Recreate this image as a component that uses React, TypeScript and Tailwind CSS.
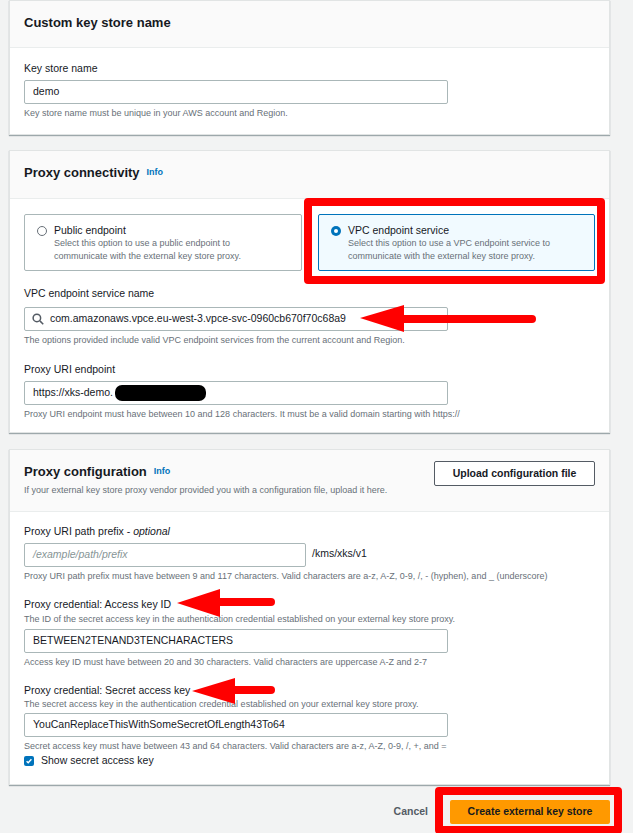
import React from "react";

const font = { fontFamily: '"Liberation Sans", Arial, sans-serif' };

function Label({ children }: { children: React.ReactNode }) {
  return <div className="text-[10.5px] leading-[14px] text-[#16191f]">{children}</div>;
}
function Help({ children, className = "" }: { children: React.ReactNode; className?: string }) {
  return <div className={"text-[9px] leading-[11px] text-[#687078] " + className}>{children}</div>;
}
function Input({ children, className = "w-[424px]" }: { children?: React.ReactNode; className?: string }) {
  return (
    <div className={"h-[24px] border border-[#aab7b8] rounded-[2px] bg-white flex items-center px-[8px] text-[10.5px] text-[#16191f] " + className}>
      {children}
    </div>
  );
}
function Info() {
  return <span className="text-[9px] font-bold text-[#0073bb] ml-[7px]">Info</span>;
}

export default function App() {
  return (
    <div style={font} className="relative w-[633px] h-[833px] bg-[#f2f3f3] overflow-hidden">
      <div className="ml-[9px] w-[601px]">
        {/* Panel 1 */}
        <section className="bg-white border border-[#e1e4e4] shadow-[0_1px_1px_rgba(0,28,36,0.35)]">
          <div className="h-[47px] px-[14px] bg-[#fafafa] border-b border-[#eaeded] flex items-center pb-[3px]">
            <h2 className="text-[13px] font-bold text-[#16191f]">Custom key store name</h2>
          </div>
          <div className="px-[14px] pt-[13px] pb-[15px]">
            <Label>Key store name</Label>
            <Input className="w-[424px] mt-[5px]">demo</Input>
            <Help className="mt-[4px]">Key store name must be unique in your AWS account and Region.</Help>
          </div>
        </section>

        {/* Panel 2 */}
        <section className="mt-[15px] bg-white border border-[#e1e4e4] shadow-[0_1px_1px_rgba(0,28,36,0.35)]">
          <div className="h-[48px] px-[14px] bg-[#fafafa] border-b border-[#eaeded] flex items-center pb-[3px]">
            <h2 className="text-[13px] font-bold text-[#16191f]">Proxy connectivity</h2>
            <Info />
          </div>
          <div className="px-[14px] pt-[15px] pb-[12px]">
            <div className="flex gap-[16px]">
              <div className="w-[278px] h-[57px] border border-[#aab7b8] rounded-[2px] flex pl-[12px] pt-[9px]">
                <span className="mt-[2px] w-[10px] h-[10px] rounded-full border border-[#687078] bg-white shrink-0" />
                <div className="ml-[7px]">
                  <div className="text-[10.5px] leading-[13px] text-[#16191f]">Public endpoint</div>
                  <div className="text-[9px] leading-[13px] text-[#687078]">
                    Select this option to use a public endpoint to
                    <br />
                    communicate with the external key store proxy.
                  </div>
                </div>
              </div>
              <div className="w-[277px] h-[57px] border border-[#0073bb] bg-[#f1faff] rounded-[2px] flex pl-[12px] pt-[9px]">
                <span className="mt-[2px] w-[10px] h-[10px] rounded-full bg-[#0073bb] shrink-0 flex items-center justify-center">
                  <span className="w-[4px] h-[4px] rounded-full bg-white" />
                </span>
                <div className="ml-[7px]">
                  <div className="text-[10.5px] leading-[13px] text-[#16191f]">VPC endpoint service</div>
                  <div className="text-[9px] leading-[13px] text-[#687078]">
                    Select this option to use a VPC endpoint service to
                    <br />
                    communicate with the external key store proxy.
                  </div>
                </div>
              </div>
            </div>
            <div className="mt-[15px]">
              <Label>VPC endpoint service name</Label>
              <Input className="w-[424px] mt-[7px] relative">
                <svg width="12" height="12" viewBox="0 0 16 16" className="mr-[6px] ml-[-1px]" fill="none" stroke="#545b64" strokeWidth="2">
                  <circle cx="6.5" cy="6.5" r="5" />
                  <path d="M10.5 10.5l4.5 4.5" />
                </svg>
                <span>com.amazonaws.vpce.eu-west-3.vpce-svc-0960cb670f70c68a9</span>
                <svg width="10" height="10" viewBox="0 0 16 16" className="absolute right-[7px]" fill="none" stroke="#545b64" strokeWidth="2">
                  <path d="M3 6l5 5 5-5" />
                </svg>
              </Input>
              <Help className="mt-[4px]">The options provided include valid VPC endpoint services from the current account and Region.</Help>
            </div>
            <div className="mt-[16px]">
              <Label>Proxy URI endpoint</Label>
              <Input className="w-[424px] mt-[5px]">
                <span>https://xks-demo.</span>
                <span className="inline-block w-[91px] h-[16px] bg-black rounded-[7px] ml-[2px]" />
              </Input>
              <Help className="mt-[4px]">Proxy URI endpoint must have between 10 and 128 characters. It must be a valid domain starting with https://</Help>
            </div>
          </div>
        </section>

        {/* Panel 3 */}
        <section className="mt-[16px] bg-white border border-[#e1e4e4] shadow-[0_1px_1px_rgba(0,28,36,0.35)]">
          <div className="h-[62px] px-[14px] bg-[#fafafa] border-b border-[#eaeded] flex items-start justify-between">
            <div className="pt-[14px]">
              <div className="flex items-center">
                <h2 className="text-[13px] leading-[16px] font-bold text-[#16191f]">Proxy configuration</h2>
                <Info />
              </div>
              <div className="text-[9px] leading-[11px] text-[#687078] mt-[5px]">
                If your external key store proxy vendor provided you with a configuration file, upload it here.
              </div>
            </div>
            <div className="mt-[11px] w-[161px] h-[25px] border border-[#545b64] rounded-[2px] bg-white flex items-center justify-center text-[10.5px] font-bold text-[#16191f]">
              Upload configuration file
            </div>
          </div>
          <div className="px-[14px] pt-[12px] pb-[15px]">
            <Label>
              Proxy URI path prefix - <i>optional</i>
            </Label>
            <div className="flex items-center mt-[5px]">
              <Input className="w-[282px]">
                <span className="italic text-[#879596]">/example/path/prefix</span>
              </Input>
              <span className="ml-[6px] text-[10.5px] text-[#16191f] -mt-[3px]">/kms/xks/v1</span>
            </div>
            <Help className="mt-[4px]">
              Proxy URI path prefix must have between 9 and 117 characters. Valid characters are a-z, A-Z, 0-9, /, - (hyphen), and _ (underscore)
            </Help>

            <div className="mt-[15px]">
              <Label>Proxy credential: Access key ID</Label>
              <Help className="mt-[3px]">The ID of the secret access key in the authentication credential established on your external key store proxy.</Help>
              <Input className="w-[424px] mt-[4px]">BETWEEN2TENAND3TENCHARACTERS</Input>
              <Help className="mt-[4px]">Access key ID must have between 20 and 30 characters. Valid characters are uppercase A-Z and 2-7</Help>
            </div>

            <div className="mt-[15px]">
              <Label>Proxy credential: Secret access key</Label>
              <Help className="mt-[2px]">The secret access key in the authentication credential established on your external key store proxy.</Help>
              <Input className="w-[424px] mt-[3px]">YouCanReplaceThisWithSomeSecretOfLength43To64</Input>
              <Help className="mt-[4px]">Secret access key must have between 43 and 64 characters. Valid characters are a-z, A-Z, 0-9, /, +, and =</Help>
              <div className="flex items-center mt-[1px]">
                <span className="w-[10px] h-[10px] rounded-[2px] bg-[#0073bb] flex items-center justify-center">
                  <svg width="8" height="8" viewBox="0 0 10 10" fill="none" stroke="white" strokeWidth="1.8">
                    <path d="M2 5.2l2 2L8 2.8" />
                  </svg>
                </span>
                <span className="ml-[7px] text-[10.5px] text-[#16191f]">Show secret access key</span>
              </div>
            </div>
          </div>
        </section>

        {/* Footer */}
        <div className="flex justify-end items-center mt-[15px]">
          <span className="text-[10.5px] font-bold text-[#545b64] mr-[22px]">Cancel</span>
          <div className="w-[160px] h-[24px] bg-[#ff9900] rounded-[2px] flex items-center justify-center text-[10.5px] font-bold text-[#16191f]">
            Create external key store
          </div>
        </div>
      </div>

      {/* Annotations */}
      <div className="absolute left-[304px] top-[198px] w-[301px] h-[86px] border-[8px] border-[#ff0000] rounded-[4px]" />
      <div className="absolute left-[435px] top-[787px] w-[187px] h-[47px] border-[8px] border-[#ff0000] rounded-[4px]" />
      <svg className="absolute left-0 top-0" width="633" height="833">
        <g fill="#ff0000" stroke="#ff0000">
          <line x1="400" y1="319" x2="532" y2="319" strokeWidth="8" strokeLinecap="round" />
          <polygon points="360,318 404,305 404,332" stroke="none" />
          <line x1="215" y1="602" x2="271" y2="602" strokeWidth="8" strokeLinecap="round" />
          <polygon points="177,603 220,589 220,617" stroke="none" />
          <line x1="230" y1="690" x2="271" y2="690" strokeWidth="8" strokeLinecap="round" />
          <polygon points="192,691 235,678 235,704" stroke="none" />
        </g>
      </svg>
    </div>
  );
}
